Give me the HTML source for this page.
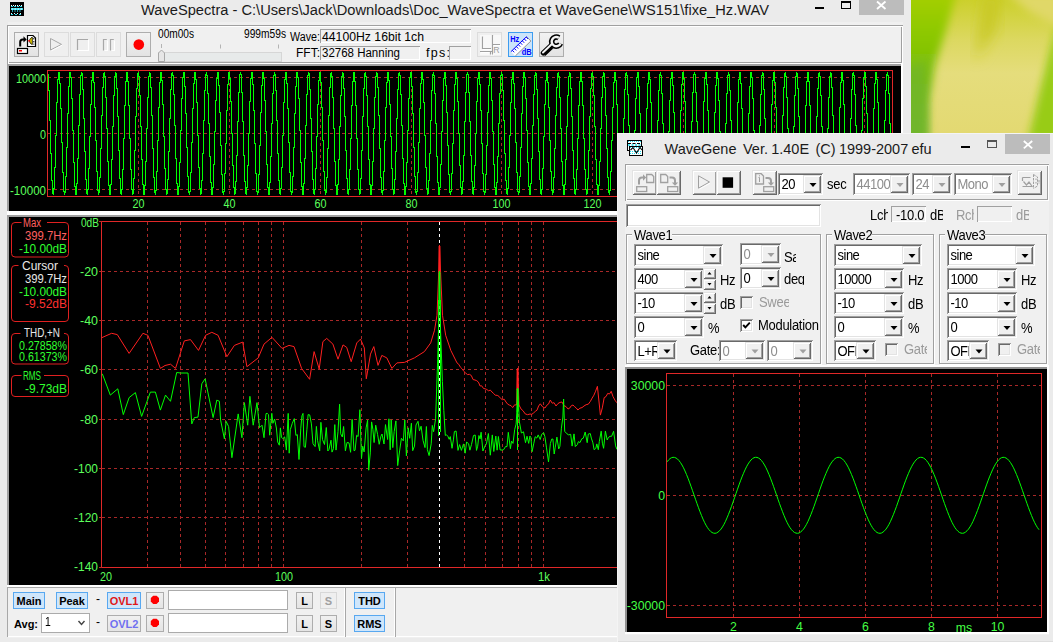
<!DOCTYPE html>
<html><head><meta charset="utf-8"><title>WaveSpectra</title>
<style>
html,body{margin:0;padding:0}
body{width:1053px;height:642px;overflow:hidden;position:relative;background:#ebebeb;font-family:"Liberation Sans",sans-serif;font-size:13px;color:#000}
div,span{position:absolute;box-sizing:border-box;white-space:pre}
svg{position:absolute;left:0;top:0;overflow:visible}
.gd{stroke:#a82828;stroke-width:1;stroke-dasharray:3 3;fill:none;shape-rendering:crispEdges}
.fr{stroke:#e02828;stroke-width:1;fill:none;shape-rendering:crispEdges}
.mono{font-family:"Liberation Mono",monospace;font-size:10px;line-height:12px;transform:scaleY(1.3);transform-origin:0 0;letter-spacing:0}
.lab{font-family:"Liberation Sans",sans-serif;font-size:12.300px;fill:#44ff44}
.mlab{font-family:"Liberation Sans",sans-serif;font-size:12.5px;fill:#5cff5c}
.mt{font-family:"Liberation Sans",sans-serif;font-size:12.5px}
.sunk1{box-shadow:inset 1px 1px 0 #a0a0a0,inset -1px -1px 0 #fff}
.sunk{background:#fff;box-shadow:inset 1px 1px 0 #a0a0a0,inset -1px -1px 0 #fff,inset 2px 2px 0 #696969,inset -2px -2px 0 #e3e3e3}
.raised{background:#f0f0f0;box-shadow:inset 1px 1px 0 #e3e3e3,inset -1px -1px 0 #696969,inset 2px 2px 0 #fff,inset -2px -2px 0 #a0a0a0}
.tb{border:1px solid #adadad;background:linear-gradient(#f2f2f2,#e3e3e3)}
.tbd{border:1px solid #dcdcdc;background:#efefef}
.tba{border:1px solid #3c9cf0;background:#cce4fa}
.t{font-size:13px;line-height:15px;letter-spacing:-0.3px;transform:scaleY(1.06);transform-origin:0 0}
.g{color:#9a9a9a}
.grp{border:1px solid #a0a0a0;box-shadow:1px 1px 0 #fff,inset 1px 1px 0 #fff}
.bb{border:1px solid #adadad;background:linear-gradient(#f0f0f0,#e4e4e4);font-weight:bold;font-size:11px;line-height:17px;text-align:center}
.ba{border:1px solid #58a8f0;background:#cfe6fb}
</style></head>
<body>
<!-- wallpaper -->
<svg width="1053" height="140" style="left:0;top:0">
<defs>
<filter id="bl" x="-20%" y="-20%" width="140%" height="140%"><feGaussianBlur stdDeviation="4"/></filter>
<filter id="bl2" x="-20%" y="-20%" width="140%" height="140%"><feGaussianBlur stdDeviation="7"/></filter>
<linearGradient id="wg1" x1="0" y1="0" x2="0" y2="1"><stop offset="0" stop-color="#ccd02c"/><stop offset="0.3" stop-color="#dcd860"/><stop offset="0.55" stop-color="#e5dd7c"/><stop offset="1" stop-color="#e3d972"/></linearGradient>
<linearGradient id="wg2" x1="0" y1="0" x2="0" y2="1"><stop offset="0" stop-color="#a8d000"/><stop offset="0.3" stop-color="#8cc800"/><stop offset="0.6" stop-color="#78bc10"/><stop offset="1" stop-color="#70b828"/></linearGradient>
<clipPath id="wc"><rect x="911" y="0" width="142" height="133"/></clipPath>
</defs>
<g clip-path="url(#wc)">
<rect x="911" y="0" width="142" height="133" fill="url(#wg1)"/>
<path d="M985 -5L1000 -5 995 30 975 60z" fill="#c8c820" filter="url(#bl2)"/>
<path d="M900 -10H957L946 30 935 65 929 100 928 140H900z" fill="url(#wg2)" filter="url(#bl)"/>
<path d="M905 70L925 60 928 140H905z" fill="#70b430" opacity=".6" filter="url(#bl)"/>
<path d="M1060 15L1050 50 1040 90 1028 140H1060z" fill="#98cc18" filter="url(#bl)"/>
<path d="M1060 -8H1005L1030 12 1060 28z" fill="#e0d868" filter="url(#bl)"/>
</g>
</svg>
<!-- ================= WaveSpectra window ================= -->
<div id="ws" style="left:0;top:0;width:911px;height:642px;background:#ebebeb">
  <div style="left:8px;top:22px;width:895px;height:616px;background:#f0f0f0"></div>
  <!-- title bar -->
  <svg width="30" height="20" viewBox="0 0 30 20"><rect x="10" y="2" width="14" height="14" fill="#000"/><path d="M11 5.500h12" stroke="#fff" stroke-width="1" stroke-dasharray="1 1"/><path d="M11 6.500h12" stroke="#30d8e8" stroke-width="1" stroke-dasharray="2 1"/><rect x="11" y="8" width="12" height="2" fill="#30e0f0"/><path d="M11.500 9h11" stroke="#fff" stroke-width="1" stroke-dasharray="1.500 1.500"/><path d="M12 11h10" stroke="#30d8e8" stroke-width="1.500" stroke-dasharray="1 1.500"/><path d="M11 13.500h12" stroke="#e0ffff" stroke-width="1" stroke-dasharray="1 2"/><path d="M11 14.500h12" stroke="#30d8e8" stroke-width="1" stroke-dasharray="2 2"/></svg>
  <span id="wstitle" style="left:141px;top:1px;font-size:14.66px;line-height:18px;color:#1a1a1a">WaveSpectra - C:\Users\Jack\Downloads\Doc_WaveSpectra et WaveGene\WS151\fixe_Hz.WAV</span>
  <div style="left:815px;top:7px;width:9px;height:2px;background:#000"></div>
  <div style="left:841px;top:1px;width:10px;height:8px;border:1px solid #000;border-top-width:2px"></div>
  <div style="left:859px;top:0;width:45px;height:15px;background:#bcbcbc"></div>
  <svg width="911" height="20"><path d="M877 1.5l8.5 7.5M885.5 1.5l-8.5 7.5" stroke="#fff" stroke-width="1.8" fill="none"/></svg>

  <!-- toolbar panel -->
  <div style="left:7px;top:25px;width:896px;height:39px;background:#f0f0f0;box-shadow:inset 1px 1px 0 #a0a0a0,inset -1px -1px 0 #fff,inset 2px 2px 0 #fff,inset -2px -2px 0 #a0a0a0"></div>
  <div class="tb" style="left:14px;top:32px;width:25px;height:25px"></div>
  <div class="tbd" style="left:44px;top:32px;width:25px;height:25px"></div>
  <div class="tbd" style="left:70px;top:32px;width:25px;height:25px"></div>
  <div class="tbd" style="left:96px;top:32px;width:25px;height:25px"></div>
  <div class="tb" style="left:126px;top:32px;width:25px;height:25px"></div>
  <div class="tbd" style="left:477px;top:32px;width:25px;height:25px"></div>
  <div class="tba" style="left:508px;top:32px;width:25px;height:25px"></div>
  <div class="tb" style="left:539px;top:32px;width:25px;height:25px"></div>
  <svg id="wsicons" width="911" height="70">
    <!-- open icon -->
    <rect x="17.5" y="48.5" width="10" height="5" fill="#fff" stroke="#000" stroke-width="1.2"/><rect x="19" y="50" width="3" height="1.5" fill="#f00"/>
    <path d="M20.2 46.5v-4.5q0-2.6 2.6-2.6h1.2" stroke="#000" stroke-width="2" fill="none"/><path d="M23.5 36.3l3.2 3.1-3.2 3.1z" fill="#000"/>
    <path d="M27.5 35.5h5.5l2.5 2.5v8.5h-8z" fill="#fff" stroke="#000" stroke-width="1.2"/><path d="M32.3 37.2c-3.6 1.2-3.6 6.2 0 7.4z" fill="#e8d000" stroke="#000" stroke-width=".8"/><path d="M33.8 38v1.4M33.8 41v1.4M33.8 43.6v1" stroke="#000" stroke-width="1"/><rect x="28.3" y="40" width="1.5" height="1.6" fill="#f00"/>
    <!-- play disabled -->
    <path d="M50.5 38.5v11.5l11-5.6z" fill="none" stroke="#a8a8a8" stroke-width="1"/><path d="M51.5 50.8l10.6-5.6" stroke="#fff" stroke-width="1"/>
    <!-- stop disabled -->
    <path d="M77.5 50v-10.5h10.5" fill="none" stroke="#a8a8a8" stroke-width="1.2"/><path d="M78 50.5h10.5v-10.5" fill="none" stroke="#fff" stroke-width="1.2"/>
    <!-- pause disabled -->
    <path d="M103.5 50.5v-11h3.3M110.5 50.5v-11h3.3" fill="none" stroke="#a8a8a8" stroke-width="1.2"/><path d="M104.5 50.5h3v-10M111.5 50.5h3v-10" fill="none" stroke="#fff" stroke-width="1.1"/>
    <!-- record -->
    <circle cx="138.8" cy="44.6" r="5.3" fill="#f00"/>
    <!-- slider -->
    <rect x="158.5" y="52.5" width="123" height="9" fill="#e7eaea" stroke="#d6d6d6" stroke-width="1"/>
    <path d="M158.5 61.500v-8.500l3-3 3 3v8.500z" fill="#e6e6e6" stroke="#a8a8a8" stroke-width="1"/>
    <path d="M161.500 44v4M220.500 44.500v4M278.500 44.500v4" stroke="#b4b4b4" stroke-width="1"/>
    <!-- LR disabled -->
    <rect x="480" y="35" width="21" height="20" fill="#f8f8f8"/>
    <path d="M483.500 37.500v12h8.500M493.500 36v19.500M481 52.500h12M494 45.500h7M491.500 53v2.500" fill="none" stroke="#fff" stroke-width="1.200"/>
    <path d="M482.500 36.500v12h8.500M492.500 35v19.500M480 51.500h12M493 44.500h7M490.500 52v2.500" fill="none" stroke="#a0a0a0" stroke-width="1.200"/>
    <text x="493.300" y="52.800" font-family="Liberation Sans,sans-serif" font-size="8.800" fill="#a0a0a0">R</text>
    <!-- Hz dB -->
    <path d="M510.900 51.700l15.600-15 4.400 4.300-15.600 15z" fill="#fff"/>
    <path d="M526.500 36.700l4.400 4.300-15.600 15" fill="none" stroke="#909090" stroke-width="1"/>
    <path d="M510.900 51.700l15.600-15" stroke="#0000ff" stroke-width="1" fill="none"/>
    <path d="M512.300 50.300l1.900 2M514.300 48.400l1.900 2M516.300 46.500l1.900 2M518.300 44.600l1.900 2M520.300 42.700l1.900 2M522.300 40.800l1.900 2M524.300 38.900l1.900 2M526.200 37l1.900 2" stroke="#0000ff" stroke-width="1"/>
    <text x="510.300" y="42" font-family="Liberation Sans,sans-serif" font-size="9.300" font-weight="bold" fill="#0000ff" textLength="9" lengthAdjust="spacingAndGlyphs">Hz</text>
    <text x="521.800" y="55.200" font-family="Liberation Sans,sans-serif" font-size="9.300" font-weight="bold" fill="#0000ff" textLength="10" lengthAdjust="spacingAndGlyphs">dB</text>
    <!-- wrench -->
    <g transform="translate(-0.8,0.9)">
    <path d="M545 54l8.500-8" stroke="#808080" stroke-width="3" stroke-linecap="square"/>
    <path d="M543.800 52l8.700-8.200" stroke="#000" stroke-width="4.800" stroke-linecap="round"/>
    <path d="M559.600 36.900a4.600 4.600 0 1 0 1.700 5.700" fill="none" stroke="#000" stroke-width="5.600" stroke-linejoin="bevel"/>
    <path d="M559.600 36.900a4.600 4.600 0 1 0 1.700 5.700" fill="none" stroke="#f4f4f4" stroke-width="2.400"/>
    <path d="M543.800 51.600l8.900-8.400" stroke="#f4f4f4" stroke-width="2" stroke-linecap="round"/>
    <path d="M545.600 54.200l7.600-7.200" stroke="#000" stroke-width="1.800"/>
    </g>
  </svg>
  <svg width="198" height="42"><text x="158" y="37.5" textLength="36" lengthAdjust="spacingAndGlyphs" class="mt" fill="#000">00m00s</text></svg>
  <svg width="290" height="42"><text x="244" y="37.5" textLength="42" lengthAdjust="spacingAndGlyphs" class="mt" fill="#000">999m59s</text></svg>
  <svg width="324" height="45"><text x="290" y="40.5" textLength="30" lengthAdjust="spacingAndGlyphs" class="mt" fill="#000">Wave:</text></svg>
  <svg width="324" height="61"><text x="296" y="56.5" textLength="24" lengthAdjust="spacingAndGlyphs" class="mt" fill="#000">FFT:</text></svg>
  <svg width="454" height="61"><text x="426" y="56.5" textLength="24" lengthAdjust="spacing" class="mt" fill="#000">fps:</text></svg>
  <div class="sunk1" style="left:320px;top:29px;width:151px;height:14px"></div>
  <div class="sunk1" style="left:320px;top:46px;width:100px;height:14px"></div>
  <div class="sunk1" style="left:449px;top:46px;width:22px;height:14px"></div>
  <svg width="428" height="45"><text x="322" y="40.5" textLength="102" lengthAdjust="spacingAndGlyphs" class="mt" fill="#000">44100Hz 16bit 1ch</text></svg>
  <svg width="404" height="61"><text x="322" y="56.5" textLength="78" lengthAdjust="spacingAndGlyphs" class="mt" fill="#000">32768 Hanning</text></svg>

  <!-- waveform display -->
  <div style="left:7px;top:64px;width:896px;height:151px;background:#fff"></div>
  <div style="left:7px;top:64px;width:894px;height:147px;background:#a0a0a0"></div>
  <div style="left:9px;top:66px;width:892px;height:145px;background:#000"></div>
  <svg width="911" height="215">
    <path d="M48 77.5H892" class="gd"/>
<path d="M48 133.5H892" class="gd"/>
<path d="M48 189.5H892" class="gd"/>
<path d="M138.5 71V196" class="gd"/>
<path d="M229.5 71V196" class="gd"/>
<path d="M320.5 71V196" class="gd"/>
<path d="M411.5 71V196" class="gd"/>
<path d="M501.5 71V196" class="gd"/>
<path d="M592.5 71V196" class="gd"/>
<path d="M683.5 71V196" class="gd"/>
<path d="M774.5 71V196" class="gd"/>
<path d="M864.5 71V196" class="gd"/>
    <path d="M48.5 74V91M49.5 90V121M50.5 120V154M51.5 153V181M52.5 180V194M53.5 188V195M54.5 167V189M55.5 135V168M56.5 102V136M57.5 79V103M58.5 72V80M59.5 72V84M60.5 83V109M61.5 108V143M62.5 142V173M63.5 172V192M64.5 191V195M65.5 176V193M66.5 147V177M67.5 113V148M68.5 86V114M69.5 72V87M70.5 72V78M71.5 77V99M72.5 98V131M73.5 130V163M74.5 162V187M75.5 186V195M76.5 183V195M77.5 158V184M78.5 125V159M79.5 94V126M80.5 75V95M81.5 72V76M82.5 73V90M83.5 89V119M84.5 118V152M85.5 151V180M86.5 179V194M87.5 189V195M88.5 168V190M89.5 136V169M90.5 104V137M91.5 80V105M92.5 72V81M93.5 72V83M94.5 82V108M95.5 107V141M96.5 140V172M97.5 171V191M98.5 190V195M99.5 177V193M100.5 148V178M101.5 115V149M102.5 87V116M103.5 73V88M104.5 72V77M105.5 76V98M106.5 97V129M107.5 128V162M108.5 161V186M109.5 185V195M110.5 184V195M111.5 159V185M112.5 126V160M113.5 95V127M114.5 76V96M115.5 72V77M116.5 73V89M117.5 88V117M118.5 116V151M119.5 150V179M120.5 178V194M121.5 189V195M122.5 169V190M123.5 138V170M124.5 105V139M125.5 81V106M126.5 72V82M127.5 72V82M128.5 81V106M129.5 105V139M130.5 138V170M131.5 169V190M132.5 189V195M133.5 178V194M134.5 150V179M135.5 116V151M136.5 88V117M137.5 73V89M138.5 72V77M139.5 76V96M140.5 95V127M141.5 126V160M142.5 159V185M143.5 184V195M144.5 185V195M145.5 161V186M146.5 128V162M147.5 97V129M148.5 76V98M149.5 72V77M150.5 73V88M151.5 87V116M152.5 115V149M153.5 148V178M154.5 177V193M155.5 190V195M156.5 171V191M157.5 140V172M158.5 107V141M159.5 82V108M160.5 72V83M161.5 72V81M162.5 80V105M163.5 104V137M164.5 136V169M165.5 168V190M166.5 189V195M167.5 179V194M168.5 151V180M169.5 118V152M170.5 89V119M171.5 73V90M172.5 72V76M173.5 75V95M174.5 94V126M175.5 125V159M176.5 158V184M177.5 183V195M178.5 186V195M179.5 162V187M180.5 130V163M181.5 98V131M182.5 77V99M183.5 72V78M184.5 72V87M185.5 86V114M186.5 113V148M187.5 147V177M188.5 176V193M189.5 191V195M190.5 172V192M191.5 142V173M192.5 108V143M193.5 83V109M194.5 72V84M195.5 72V80M196.5 79V103M197.5 102V136M198.5 135V168M199.5 167V189M200.5 188V195M201.5 180V194M202.5 153V181M203.5 120V154M204.5 90V121M205.5 74V91M206.5 72V76M207.5 75V94M208.5 93V124M209.5 123V157M210.5 156V183M211.5 182V195M212.5 187V195M213.5 164V188M214.5 131V165M215.5 100V132M216.5 78V101M217.5 72V79M218.5 72V86M219.5 85V113M220.5 112V146M221.5 145V175M222.5 174V193M223.5 191V195M224.5 173V192M225.5 143V174M226.5 110V144M227.5 84V111M228.5 72V85M229.5 72V79M230.5 78V102M231.5 101V134M232.5 133V166M233.5 165V188M234.5 187V195M235.5 181V194M236.5 155V182M237.5 121V156M238.5 92V122M239.5 74V93M240.5 72V75M241.5 74V93M242.5 92V122M243.5 121V156M244.5 155V182M245.5 181V194M246.5 187V195M247.5 165V188M248.5 133V166M249.5 101V134M250.5 78V102M251.5 72V79M252.5 72V85M253.5 84V111M254.5 110V144M255.5 143V174M256.5 173V192M257.5 191V195M258.5 174V193M259.5 145V175M260.5 112V146M261.5 85V113M262.5 72V86M263.5 72V79M264.5 78V101M265.5 100V132M266.5 131V165M267.5 164V188M268.5 187V195M269.5 182V195M270.5 156V183M271.5 123V157M272.5 93V124M273.5 75V94M274.5 72V76M275.5 74V91M276.5 90V121M277.5 120V154M278.5 153V181M279.5 180V194M280.5 188V195M281.5 167V189M282.5 135V168M283.5 102V136M284.5 79V103M285.5 72V80M286.5 72V84M287.5 83V109M288.5 108V143M289.5 142V173M290.5 172V192M291.5 191V195M292.5 176V193M293.5 147V177M294.5 113V148M295.5 86V114M296.5 72V87M297.5 72V78M298.5 77V99M299.5 98V131M300.5 130V163M301.5 162V187M302.5 186V195M303.5 183V195M304.5 158V184M305.5 125V159M306.5 94V126M307.5 75V95M308.5 72V76M309.5 73V90M310.5 89V119M311.5 118V152M312.5 151V180M313.5 179V194M314.5 189V195M315.5 168V190M316.5 136V169M317.5 104V137M318.5 80V105M319.5 72V81M320.5 72V83M321.5 82V108M322.5 107V141M323.5 140V172M324.5 171V191M325.5 190V195M326.5 177V193M327.5 148V178M328.5 115V149M329.5 87V116M330.5 73V88M331.5 72V77M332.5 76V98M333.5 97V129M334.5 128V162M335.5 161V186M336.5 185V195M337.5 184V195M338.5 159V185M339.5 126V160M340.5 95V127M341.5 76V96M342.5 72V77M343.5 73V89M344.5 88V117M345.5 116V151M346.5 150V179M347.5 178V194M348.5 189V195M349.5 169V190M350.5 138V170M351.5 105V139M352.5 81V106M353.5 72V82M354.5 72V82M355.5 81V106M356.5 105V139M357.5 138V170M358.5 169V190M359.5 189V195M360.5 178V194M361.5 150V179M362.5 116V151M363.5 88V117M364.5 73V89M365.5 72V77M366.5 76V96M367.5 95V127M368.5 126V160M369.5 159V185M370.5 184V195M371.5 185V195M372.5 161V186M373.5 128V162M374.5 97V129M375.5 76V98M376.5 72V77M377.5 73V88M378.5 87V116M379.5 115V149M380.5 148V178M381.5 177V193M382.5 190V195M383.5 171V191M384.5 140V172M385.5 107V141M386.5 82V108M387.5 72V83M388.5 72V81M389.5 80V105M390.5 104V137M391.5 136V169M392.5 168V190M393.5 189V195M394.5 179V194M395.5 151V180M396.5 118V152M397.5 89V119M398.5 73V90M399.5 72V76M400.5 75V95M401.5 94V126M402.5 125V159M403.5 158V184M404.5 183V195M405.5 186V195M406.5 162V187M407.5 130V163M408.5 98V131M409.5 77V99M410.5 72V78M411.5 72V87M412.5 86V114M413.5 113V148M414.5 147V177M415.5 176V193M416.5 191V195M417.5 172V192M418.5 142V173M419.5 108V143M420.5 83V109M421.5 72V84M422.5 72V80M423.5 79V103M424.5 102V136M425.5 135V168M426.5 167V189M427.5 188V195M428.5 180V194M429.5 153V181M430.5 120V154M431.5 90V121M432.5 74V91M433.5 72V76M434.5 75V94M435.5 93V124M436.5 123V157M437.5 156V183M438.5 182V195M439.5 187V195M440.5 164V188M441.5 131V165M442.5 100V132M443.5 78V101M444.5 72V79M445.5 72V86M446.5 85V113M447.5 112V146M448.5 145V175M449.5 174V193M450.5 191V195M451.5 173V192M452.5 143V174M453.5 110V144M454.5 84V111M455.5 72V85M456.5 72V79M457.5 78V102M458.5 101V134M459.5 133V166M460.5 165V188M461.5 187V195M462.5 181V194M463.5 155V182M464.5 121V156M465.5 92V122M466.5 74V93M467.5 72V75M468.5 74V93M469.5 92V122M470.5 121V156M471.5 155V182M472.5 181V194M473.5 187V195M474.5 165V188M475.5 133V166M476.5 101V134M477.5 78V102M478.5 72V79M479.5 72V85M480.5 84V111M481.5 110V144M482.5 143V174M483.5 173V192M484.5 191V195M485.5 174V193M486.5 145V175M487.5 112V146M488.5 85V113M489.5 72V86M490.5 72V79M491.5 78V101M492.5 100V132M493.5 131V165M494.5 164V188M495.5 187V195M496.5 182V195M497.5 156V183M498.5 123V157M499.5 93V124M500.5 75V94M501.5 72V76M502.5 74V91M503.5 90V121M504.5 120V154M505.5 153V181M506.5 180V194M507.5 188V195M508.5 167V189M509.5 135V168M510.5 102V136M511.5 79V103M512.5 72V80M513.5 72V84M514.5 83V109M515.5 108V143M516.5 142V173M517.5 172V192M518.5 191V195M519.5 176V193M520.5 147V177M521.5 113V148M522.5 86V114M523.5 72V87M524.5 72V78M525.5 77V99M526.5 98V131M527.5 130V163M528.5 162V187M529.5 186V195M530.5 183V195M531.5 158V184M532.5 125V159M533.5 94V126M534.5 75V95M535.5 72V76M536.5 73V90M537.5 89V119M538.5 118V152M539.5 151V180M540.5 179V194M541.5 189V195M542.5 168V190M543.5 136V169M544.5 104V137M545.5 80V105M546.5 72V81M547.5 72V83M548.5 82V108M549.5 107V141M550.5 140V172M551.5 171V191M552.5 190V195M553.5 177V193M554.5 148V178M555.5 115V149M556.5 87V116M557.5 73V88M558.5 72V77M559.5 76V98M560.5 97V129M561.5 128V162M562.5 161V186M563.5 185V195M564.5 184V195M565.5 159V185M566.5 126V160M567.5 95V127M568.5 76V96M569.5 72V77M570.5 73V89M571.5 88V117M572.5 116V151M573.5 150V179M574.5 178V194M575.5 189V195M576.5 169V190M577.5 138V170M578.5 105V139M579.5 81V106M580.5 72V82M581.5 72V82M582.5 81V106M583.5 105V139M584.5 138V170M585.5 169V190M586.5 189V195M587.5 178V194M588.5 150V179M589.5 116V151M590.5 88V117M591.5 73V89M592.5 72V77M593.5 76V96M594.5 95V127M595.5 126V160M596.5 159V185M597.5 184V195M598.5 185V195M599.5 161V186M600.5 128V162M601.5 97V129M602.5 76V98M603.5 72V77M604.5 73V88M605.5 87V116M606.5 115V149M607.5 148V178M608.5 177V193M609.5 190V195M610.5 171V191M611.5 140V172M612.5 107V141M613.5 82V108M614.5 72V83M615.5 72V81M616.5 80V105M617.5 104V137M618.5 136V169M619.5 168V190M620.5 189V195M621.5 179V194M622.5 151V180M623.5 118V152M624.5 89V119M625.5 73V90M626.5 72V76M627.5 75V95M628.5 94V126M629.5 125V159M630.5 158V184M631.5 183V195M632.5 186V195M633.5 162V187M634.5 130V163M635.5 98V131M636.5 77V99M637.5 72V78M638.5 72V87M639.5 86V114M640.5 113V148M641.5 147V177M642.5 176V193M643.5 191V195M644.5 172V192M645.5 142V173M646.5 108V143M647.5 83V109M648.5 72V84M649.5 72V80M650.5 79V103M651.5 102V136M652.5 135V168M653.5 167V189M654.5 188V195M655.5 180V194M656.5 153V181M657.5 120V154M658.5 90V121M659.5 74V91M660.5 72V76M661.5 75V94M662.5 93V124M663.5 123V157M664.5 156V183M665.5 182V195M666.5 187V195M667.5 164V188M668.5 131V165M669.5 100V132M670.5 78V101M671.5 72V79M672.5 72V86M673.5 85V113M674.5 112V146M675.5 145V175M676.5 174V193M677.5 191V195M678.5 173V192M679.5 143V174M680.5 110V144M681.5 84V111M682.5 72V85M683.5 72V79M684.5 78V102M685.5 101V134M686.5 133V166M687.5 165V188M688.5 187V195M689.5 181V194M690.5 155V182M691.5 121V156M692.5 92V122M693.5 74V93M694.5 72V75M695.5 74V93M696.5 92V122M697.5 121V156M698.5 155V182M699.5 181V194M700.5 187V195M701.5 165V188M702.5 133V166M703.5 101V134M704.5 78V102M705.5 72V79M706.5 72V85M707.5 84V111M708.5 110V144M709.5 143V174M710.5 173V192M711.5 191V195M712.5 174V193M713.5 145V175M714.5 112V146M715.5 85V113M716.5 72V86M717.5 72V79M718.5 78V101M719.5 100V132M720.5 131V165M721.5 164V188M722.5 187V195M723.5 182V195M724.5 156V183M725.5 123V157M726.5 93V124M727.5 75V94M728.5 72V76M729.5 74V91M730.5 90V121M731.5 120V154M732.5 153V181M733.5 180V194M734.5 188V195M735.5 167V189M736.5 135V168M737.5 102V136M738.5 79V103M739.5 72V80M740.5 72V84M741.5 83V109M742.5 108V143M743.5 142V173M744.5 172V192M745.5 191V195M746.5 176V193M747.5 147V177M748.5 113V148M749.5 86V114M750.5 72V87M751.5 72V78M752.5 77V99M753.5 98V131M754.5 130V163M755.5 162V187M756.5 186V195M757.5 183V195M758.5 158V184M759.5 125V159M760.5 94V126M761.5 75V95M762.5 72V76M763.5 73V90M764.5 89V119M765.5 118V152M766.5 151V180M767.5 179V194M768.5 189V195M769.5 168V190M770.5 136V169M771.5 104V137M772.5 80V105M773.5 72V81M774.5 72V83M775.5 82V108M776.5 107V141M777.5 140V172M778.5 171V191M779.5 190V195M780.5 177V193M781.5 148V178M782.5 115V149M783.5 87V116M784.5 73V88M785.5 72V77M786.5 76V98M787.5 97V129M788.5 128V162M789.5 161V186M790.5 185V195M791.5 184V195M792.5 159V185M793.5 126V160M794.5 95V127M795.5 76V96M796.5 72V77M797.5 73V89M798.5 88V117M799.5 116V151M800.5 150V179M801.5 178V194M802.5 189V195M803.5 169V190M804.5 138V170M805.5 105V139M806.5 81V106M807.5 72V82M808.5 72V82M809.5 81V106M810.5 105V139M811.5 138V170M812.5 169V190M813.5 189V195M814.5 178V194M815.5 150V179M816.5 116V151M817.5 88V117M818.5 73V89M819.5 72V77M820.5 76V96M821.5 95V127M822.5 126V160M823.5 159V185M824.5 184V195M825.5 185V195M826.5 161V186M827.5 128V162M828.5 97V129M829.5 76V98M830.5 72V77M831.5 73V88M832.5 87V116M833.5 115V149M834.5 148V178M835.5 177V193M836.5 190V195M837.5 171V191M838.5 140V172M839.5 107V141M840.5 82V108M841.5 72V83M842.5 72V81M843.5 80V105M844.5 104V137M845.5 136V169M846.5 168V190M847.5 189V195M848.5 179V194M849.5 151V180M850.5 118V152M851.5 89V119M852.5 73V90M853.5 72V76M854.5 75V95M855.5 94V126M856.5 125V159M857.5 158V184M858.5 183V195M859.5 186V195M860.5 162V187M861.5 130V163M862.5 98V131M863.5 77V99M864.5 72V78M865.5 72V87M866.5 86V114M867.5 113V148M868.5 147V177M869.5 176V193M870.5 191V195M871.5 172V192M872.5 142V173M873.5 108V143M874.5 83V109M875.5 72V84M876.5 72V80M877.5 79V103M878.5 102V136M879.5 135V168M880.5 167V189M881.5 188V195M882.5 180V194M883.5 153V181M884.5 120V154M885.5 90V121M886.5 74V91M887.5 72V76M888.5 75V94M889.5 93V124M890.5 123V157M891.5 156V183" stroke="#00ff00" stroke-width="1" fill="none" shape-rendering="crispEdges"/>
    <rect x="47.500" y="70.500" width="845" height="126" class="fr"/>
    <g class="mlab">
      <text x="16" y="82.5" textLength="30" lengthAdjust="spacingAndGlyphs">10000</text><text x="40" y="138.5" textLength="6" lengthAdjust="spacingAndGlyphs">0</text><text x="10" y="194.5" textLength="36" lengthAdjust="spacingAndGlyphs">-10000</text>
      <text x="132.5" y="208" textLength="12" lengthAdjust="spacingAndGlyphs">20</text><text x="223.5" y="208" textLength="12" lengthAdjust="spacingAndGlyphs">40</text><text x="314.5" y="208" textLength="12" lengthAdjust="spacingAndGlyphs">60</text><text x="405.5" y="208" textLength="12" lengthAdjust="spacingAndGlyphs">80</text><text x="492.5" y="208" textLength="18" lengthAdjust="spacingAndGlyphs">100</text><text x="583.5" y="208" textLength="18" lengthAdjust="spacingAndGlyphs">120</text>
    </g>
  </svg>

  <!-- spectrum display -->
  <div style="left:7px;top:215px;width:896px;height:372px;background:#fff"></div>
  <div style="left:7px;top:215px;width:894px;height:370px;background:#a0a0a0"></div>
  <div style="left:9px;top:217px;width:892px;height:368px;background:#000"></div>
  <svg width="911" height="590">
    <path d="M102 271.5H617" class="gd"/>
<path d="M102 320.5H617" class="gd"/>
<path d="M102 369.5H617" class="gd"/>
<path d="M102 419.5H617" class="gd"/>
<path d="M102 468.5H617" class="gd"/>
<path d="M102 517.5H617" class="gd"/>
<path d="M147.5 222V569" class="gd"/>
<path d="M180.5 222V569" class="gd"/>
<path d="M205.5 222V569" class="gd"/>
<path d="M225.5 222V569" class="gd"/>
<path d="M243.5 222V569" class="gd"/>
<path d="M258.5 222V569" class="gd"/>
<path d="M271.5 222V569" class="gd"/>
<path d="M283.5 222V569" class="gd"/>
<path d="M361.5 222V569" class="gd"/>
<path d="M407.5 222V569" class="gd"/>
<path d="M464.5 222V569" class="gd"/>
<path d="M485.5 222V569" class="gd"/>
<path d="M502.5 222V569" class="gd"/>
<path d="M518.5 222V569" class="gd"/>
<path d="M531.5 222V569" class="gd"/>
<path d="M543.5 222V569" class="gd"/>
    <path d="M439.500 222V567" stroke="#fff" stroke-width="1" stroke-dasharray="3 3" fill="none" shape-rendering="crispEdges"/>
    <polyline points="101.3,337.9 111.6,333.3 117.3,334.6 129.1,353.4 142.9,333.3 147.9,335.3 160.4,368.4 165.0,365.5 170.5,364.2 175.5,368.4 184.3,340.9 190.5,339.6 198.5,350.4 205.6,335.3 211.8,332.3 218.1,335.3 226.9,356.7 234.4,345.4 242.7,342.1 246.9,366.7 258.2,357.9 264.0,344.1 272.0,337.3 282.0,348.4 289.0,345.4 294.0,346.6 301.6,368.4 309.6,379.3 314.1,351.6 319.2,369.0 322.9,341.6 326.7,338.4 332.9,344.1 338.0,359.2 343.0,344.9 346.7,347.4 351.2,361.7 356.8,342.9 360.5,339.1 364.3,347.9 366.3,378.8 370.5,354.1 373.8,346.6 378.0,365.4 381.8,355.4 386.8,357.9 391.9,368.4 396.9,362.9 404.4,362.4 414.4,357.9 424.4,351.6 430.7,342.9 434.5,330.3 437.0,315.3 438.7,272.7 439.5,245.1 440.6,272.7 442.5,315.3 445.7,335.3 450.8,350.4 457.0,362.9 458.7,364.2 460.4,367.2 462.1,368.8 463.8,371.3 465.7,373.1 467.5,374.6 469.4,374.3 471.3,375.5 473.1,379.6 475.0,380.0 476.7,380.7 478.4,382.1 480.1,386.0 481.7,385.8 483.4,388.4 485.1,388.8 486.8,389.5 488.6,390.8 490.3,390.1 492.0,392.0 493.7,393.5 495.4,395.3 497.2,395.3 498.9,396.3 500.7,398.5 502.4,399.7 504.2,399.2 506.0,402.0 507.7,404.2 509.4,405.1 511.0,405.6 512.7,407.6 514.6,404.8 516.5,405.0 517.7,368.0 519.0,405.0 521.1,409.1 523.1,410.8 525.2,413.9 527.6,414.7 530.0,414.0 531.8,414.3 533.5,413.0 535.3,411.4 537.0,410.2 538.6,406.0 540.3,403.8 542.6,406.9 545.0,408.0 546.8,405.2 548.5,404.1 550.3,400.0 552.2,403.2 554.1,402.7 556.0,406.0 558.0,403.5 560.0,402.4 562.0,402.0 564.0,405.8 566.0,406.5 568.0,409.0 569.7,408.1 571.3,405.7 573.0,405.0 574.6,406.7 576.3,408.0 577.9,410.0 579.9,408.2 582.0,407.6 584.0,406.0 586.1,404.7 588.3,404.2 590.4,401.3 592.1,398.1 593.9,395.2 595.6,391.2 597.4,386.3 600.4,415.1 602.3,407.9 604.2,397.6 606.0,396.6 607.7,393.4 609.5,394.0 611.2,391.3 613.0,396.6 614.9,400.1 616.7,402.6 618.4,401.5 620.0,400.0" stroke="#ff2020" stroke-width="1" fill="none"/>
    <path d="M439.500 246V274M517.500 369V390" stroke="#ff2020" stroke-width="1.800" fill="none"/>
    <polyline points="102.3,373.8 110.3,395.1 117.8,388.8 123.3,414.6 129.1,397.6 135.4,392.6 141.6,416.4 150.4,392.1 155.4,392.1 160.4,410.1 165.5,395.1 170.5,401.3 176.7,372.5 180.5,373.0 188.0,373.0 191.8,423.9 194.3,417.6 198.0,417.1 201.8,383.8 205.1,378.8 213.1,417.6 216.8,400.1 219.4,401.3 220.6,420.1 224.4,438.9 226.1,421.4 228.6,426.4 231.9,457.7 238.2,413.9 241.9,437.7 244.4,402.6 247.7,425.2 249.9,396.3 253.2,425.2 257.0,402.6 259.5,427.7 262.0,425.2 264.0,437.7 266.0,413.6 267.4,413.4 268.5,414.7 269.7,435.2 271.8,413.3 272.9,423.3 274.6,419.0 276.4,428.0 277.7,442.0 279.3,445.2 280.4,427.9 281.5,437.5 282.8,438.6 284.7,436.9 286.4,450.1 288.2,413.4 289.2,453.2 290.3,429.7 292.3,423.3 294.3,418.6 295.9,435.4 297.3,434.6 299.0,459.5 300.8,428.2 301.9,415.9 303.0,413.4 304.0,446.7 305.4,447.3 306.9,429.7 308.1,414.6 309.7,414.9 311.4,423.9 313.0,443.7 315.1,446.6 316.4,426.4 317.6,440.7 319.7,450.8 320.9,422.3 322.5,439.5 324.5,444.5 326.3,427.5 327.8,451.0 329.0,449.4 331.0,440.2 332.0,452.1 333.5,448.5 334.8,424.6 336.0,450.1 338.0,431.6 339.6,404.2 340.7,433.8 342.3,437.0 343.6,426.5 345.4,450.8 347.0,442.5 349.0,442.9 350.6,452.3 352.1,419.3 354.0,450.7 355.1,450.2 356.6,435.3 358.1,436.5 359.9,409.7 361.5,458.4 362.7,446.2 364.1,451.9 366.1,427.9 367.6,420.2 368.7,470.2 370.3,452.9 371.6,421.9 372.9,429.4 374.1,442.6 375.7,425.2 377.6,434.5 379.2,444.3 380.9,436.3 382.0,434.0 384.0,444.0 385.5,424.6 387.6,439.5 388.9,418.8 390.2,449.8 391.2,419.8 392.8,447.6 394.2,431.5 395.9,420.9 397.7,465.6 399.6,450.9 401.4,438.2 403.3,440.9 404.8,419.9 406.4,455.9 408.2,427.8 409.7,438.3 411.4,423.2 412.7,450.7 414.5,446.1 416.0,425.0 418.0,421.3 419.5,430.9 421.1,426.2 423.0,440.3 425.0,447.6 426.4,426.5 427.4,449.7 429.1,455.6 431.2,443.8 432.3,425.4 433.6,431.7 435.6,418.8 437.7,359.1 439.2,302.3 439.5,271.0 440.3,323.5 442.4,381.6 443.8,410.4 445.3,435.4 446.5,434.8 447.8,436.2 449.2,439.3 450.3,436.6 452.0,448.3 453.4,439.9 454.4,431.6 456.1,431.0 458.0,450.4 459.6,444.6 461.4,450.4 463.5,443.9 465.2,453.2 466.6,441.9 468.6,443.9 469.9,450.2 471.5,444.5 473.5,435.5 475.2,435.0 476.5,450.4 477.7,446.2 478.9,435.5 480.1,438.9 481.1,432.2 482.9,451.0 485.0,445.9 486.4,443.9 488.4,433.5 490.3,455.2 492.3,434.9 493.8,451.5 495.8,436.1 497.1,450.2 498.4,436.5 500.1,449.9 502.2,450.1 503.7,449.6 505.6,446.5 507.0,446.6 508.3,432.3 510.4,448.7 511.5,441.0 513.0,443.4 514.7,429.5 516.1,424.1 517.3,405.3 517.7,388.0 519.4,421.9 521.4,433.0 523.5,431.8 525.5,442.7 527.0,436.2 528.7,443.4 529.9,436.1 530.9,437.5 532.1,451.7 533.7,443.8 535.2,436.7 536.8,438.1 538.2,434.9 540.2,439.5 541.7,434.3 543.7,432.8 544.9,436.7 546.4,447.1 548.5,461.9 550.4,443.4 551.7,439.1 552.9,439.0 554.2,454.0 555.2,447.8 556.9,437.1 558.7,448.9 559.9,446.3 561.4,428.2 562.9,417.0 563.6,399.0 564.7,431.3 566.8,433.7 568.7,434.9 570.7,434.3 572.1,446.1 574.0,433.9 575.3,446.6 577.3,444.6 578.4,441.6 580.0,442.6 581.7,438.9 583.3,438.2 585.2,432.0 587.2,442.7 588.3,434.0 590.3,433.6 591.3,438.1 592.9,442.8 594.1,449.7 595.8,448.4 596.8,443.9 598.3,449.7 599.3,441.6 601.2,431.2 602.4,443.2 603.6,448.3 605.4,431.1 607.2,440.0 608.2,437.7 610.0,436.3 611.6,436.3 613.6,431.3 615.6,445.9 616.9,449.2 618.9,440.4" stroke="#00ff00" stroke-width="1" fill="none"/>
    <path d="M439.500 272V304M517.500 389V412" stroke="#00ff00" stroke-width="1.800" fill="none"/>
    <path d="M438.500 300V436M440.500 300V432M517.500 412V450" stroke="#00ff00" stroke-width="1" fill="none"/>
    <path d="M101.500 221V567.500H620M101.500 221.500H620" class="fr"/>
    <path d="M99 271.500h3M99 320.500h3M99 369.500h3M99 419.500h3M99 468.500h3M99 517.500h3M99 567.500h3M99 221.500h3" stroke="#c02828" stroke-width="1" shape-rendering="crispEdges"/>
    <g class="mlab">
      <text x="81" y="227" textLength="18" lengthAdjust="spacingAndGlyphs">0dB</text><text x="80" y="276" textLength="18" lengthAdjust="spacingAndGlyphs">-20</text><text x="80" y="325" textLength="18" lengthAdjust="spacingAndGlyphs">-40</text><text x="80" y="374" textLength="18" lengthAdjust="spacingAndGlyphs">-60</text><text x="80" y="424" textLength="18" lengthAdjust="spacingAndGlyphs">-80</text><text x="74" y="473" textLength="24" lengthAdjust="spacingAndGlyphs">-100</text><text x="74" y="522" textLength="24" lengthAdjust="spacingAndGlyphs">-120</text><text x="74" y="571" textLength="24" lengthAdjust="spacingAndGlyphs">-140</text>
      <text x="100" y="581" textLength="12" lengthAdjust="spacingAndGlyphs">20</text><text x="275" y="581" textLength="18" lengthAdjust="spacingAndGlyphs">100</text><text x="538" y="581" textLength="12" lengthAdjust="spacingAndGlyphs">1k</text>
    </g>
    <g fill="none" stroke="#e02020" stroke-width="1">
      <path d="M21.500 222.500h-6.500q-3.500 0-3.500 3.500v27.500q0 3.500 3.500 3.500h50q3.500 0 3.500-3.500v-27.500q0-3.500-3.500-3.500h-18"/>
      <path d="M18.500 265.500h-3.500q-3.500 0-3.500 3.500v49q0 3.500 3.500 3.500h50q3.500 0 3.500-3.500v-49q0-3.500-3.500-3.500h-1"/>
      <path d="M20.500 333.500h-5.500q-3.500 0-3.500 3.500v23.500q0 3.500 3.500 3.500h50q3.500 0 3.500-3.500v-23.500q0-3.500-3.500-3.500h-1"/>
      <path d="M21.500 375.500h-6.500q-3.500 0-3.500 3.500v14q0 3.500 3.500 3.500h50q3.500 0 3.500-3.500v-14q0-3.500-3.500-3.500h-21"/>
    </g>
  </svg>
  <svg width="45" height="231"><text x="23" y="226.5" textLength="18" lengthAdjust="spacingAndGlyphs" class="mt" fill="#ff6060">Max</text></svg>
  <svg width="71" height="244"><text x="25" y="239.5" textLength="42" lengthAdjust="spacingAndGlyphs" class="mt" fill="#ff6060">399.7Hz</text></svg>
  <svg width="71" height="257"><text x="19" y="252.5" textLength="48" lengthAdjust="spacingAndGlyphs" class="mt" fill="#30ff30">-10.00dB</text></svg>
  <svg width="62" height="274"><text x="22" y="269.5" textLength="36" lengthAdjust="spacingAndGlyphs" class="mt" fill="#e8e8e8">Cursor</text></svg>
  <svg width="71" height="287"><text x="25" y="282.5" textLength="42" lengthAdjust="spacingAndGlyphs" class="mt" fill="#e8e8e8">399.7Hz</text></svg>
  <svg width="71" height="300"><text x="19" y="295.5" textLength="48" lengthAdjust="spacingAndGlyphs" class="mt" fill="#30ff30">-10.00dB</text></svg>
  <svg width="71" height="312"><text x="25" y="307.5" textLength="42" lengthAdjust="spacingAndGlyphs" class="mt" fill="#ff3030">-9.52dB</text></svg>
  <svg width="64" height="341"><text x="24" y="336.5" textLength="36" lengthAdjust="spacingAndGlyphs" class="mt" fill="#e8e8e8">THD,+N</text></svg>
  <svg width="71" height="354"><text x="19" y="349.5" textLength="48" lengthAdjust="spacingAndGlyphs" class="mt" fill="#30ff30">0.27858%</text></svg>
  <svg width="71" height="365"><text x="19" y="360.5" textLength="48" lengthAdjust="spacingAndGlyphs" class="mt" fill="#30ff30">0.61373%</text></svg>
  <svg width="45" height="384"><text x="23" y="379.5" textLength="18" lengthAdjust="spacingAndGlyphs" class="mt" fill="#30ff30">RMS</text></svg>
  <svg width="71" height="397"><text x="25" y="392.5" textLength="42" lengthAdjust="spacingAndGlyphs" class="mt" fill="#30ff30">-9.73dB</text></svg>

  <!-- bottom bar -->
  <div style="left:7px;top:587px;width:338px;height:50px;box-shadow:inset 1px 1px 0 #a8a8a8,inset -1px -1px 0 #fff"></div>
  <div style="left:345px;top:587px;width:50px;height:50px;box-shadow:inset 1px 1px 0 #a8a8a8,inset -1px -1px 0 #fff"></div>
  <div style="left:395px;top:587px;width:508px;height:50px;box-shadow:inset 1px 1px 0 #a8a8a8,inset -1px -1px 0 #fff"></div>
  <div class="bb ba" style="left:13px;top:592px;width:32px;height:17px">Main</div>
  <div class="bb ba" style="left:56px;top:592px;width:32px;height:17px">Peak</div>
  <span style="left:96px;top:592px;font-size:12px;line-height:15px">-</span>
  <div class="bb ba" style="left:107px;top:592px;width:34px;height:17px;color:#e01818">OVL1</div>
  <div class="bb" style="left:146px;top:592px;width:18px;height:17px"></div>
  <div style="left:168px;top:590px;width:120px;height:20px;background:#fff;border:1px solid #ababab"></div>
  <div class="bb" style="left:296px;top:592px;width:17px;height:17px">L</div>
  <div class="bb" style="left:320px;top:592px;width:17px;height:17px;color:#a0a0a0;border-color:#d8d8d8;background:#efefef">S</div>
  <div class="bb ba" style="left:354px;top:592px;width:31px;height:17px">THD</div>
  <span style="left:14px;top:617px;font-size:11px;line-height:15px;font-weight:bold">Avg:</span>
  <div style="left:41px;top:613px;width:49px;height:20px;background:#fff;border:1px solid #ababab"></div>
  <span style="left:45px;top:614px;font-size:13px;line-height:15px;transform:scaleX(.8);transform-origin:0 0">1</span>
  <span style="left:96px;top:615px;font-size:12px;line-height:15px">-</span>
  <div class="bb" style="left:107px;top:615px;width:34px;height:17px;color:#7070f0">OVL2</div>
  <div class="bb" style="left:146px;top:615px;width:18px;height:17px"></div>
  <div style="left:168px;top:613px;width:120px;height:20px;background:#fff;border:1px solid #ababab"></div>
  <div class="bb" style="left:296px;top:615px;width:17px;height:17px">L</div>
  <div class="bb" style="left:320px;top:615px;width:17px;height:17px">S</div>
  <div class="bb ba" style="left:354px;top:615px;width:31px;height:17px">RMS</div>
  <svg width="400" height="642"><path id="oct" d="M153.200 595.700h3.400l2.400 2.400v3.400l-2.400 2.400h-3.400l-2.400-2.400v-3.400z" fill="#f00"/><path d="M153.200 618.700h3.400l2.400 2.400v3.400l-2.400 2.400h-3.400l-2.400-2.400v-3.400z" fill="#f00"/><path d="M78.500 621l3 3.500 3-3.500" stroke="#444" stroke-width="1.400" fill="none"/></svg>
</div>

<div id="wg" style="left:617px;top:133px;width:436px;height:509px;background:#ebebeb;box-shadow:inset 1px 1px 0 #f4f4f4,inset 0 -1px 0 #dedede">
<div style="left:8px;top:30px;width:424px;height:472px;background:#f0f0f0"></div>
</div>
<svg width="1053" height="642"><rect x="627" y="140" width="15" height="11" fill="#000"/><rect x="628" y="141" width="13" height="9" fill="#fff"/><path d="M628 141.500h13" stroke="#20e0f0" stroke-width="1" stroke-dasharray="1 1"/><path d="M628 143.500h13" stroke="#000" stroke-width="1" stroke-dasharray="3 1.500"/><path d="M628 145h13" stroke="#20e0f0" stroke-width="1.600" stroke-dasharray="2 1.500"/><rect x="629" y="146" width="14" height="10" fill="#000"/><rect x="630" y="147" width="12" height="8" fill="#fff"/><path d="M630 147.500h12M630 151.500h12M630 153.500h12" stroke="#20e0f0" stroke-width="1" stroke-dasharray="1 1"/><path d="M630.500 150l2.500-2.500 3.500 5.500 3.500-5.500 2 2.500" stroke="#000" stroke-width="1.100" fill="none"/></svg>
<span style="left:664.500px;top:140px;font-size:14.500px;line-height:18px;color:#1a1a1a;word-spacing:-0.800px" id="wgtitle">WaveGene  Ver. 1.40E  (C) 1999-2007 efu</span>
<div style="left:961px;top:146px;width:9px;height:2px;background:#000"></div>
<div style="left:987px;top:140px;width:10px;height:8px;border:1px solid #555;border-top-width:2px"></div>
<div style="left:1005px;top:134px;width:45px;height:20px;background:#bcbcbc"></div>
<svg width="1053" height="160"><path d="M1023.800 141l8.400 7.400M1032.200 141l-8.400 7.400" stroke="#fff" stroke-width="1.800" fill="none"/></svg>
<div style="left:625px;top:164px;width:424px;height:37px;background:#f0f0f0;box-shadow:inset 1px 1px 0 #a0a0a0,inset -1px -1px 0 #fff,inset 2px 2px 0 #fff,inset -2px -2px 0 #a0a0a0"></div>
<div class="raised" style="left:632px;top:170px;width:25px;height:25px"></div>
<div class="raised" style="left:656px;top:170px;width:25px;height:25px"></div>
<div class="raised" style="left:692px;top:170px;width:25px;height:25px"></div>
<div class="raised" style="left:716px;top:170px;width:25px;height:25px"></div>
<div class="raised" style="left:752px;top:170px;width:25px;height:25px"></div>
<div class="raised" style="left:1017px;top:170px;width:25px;height:25px"></div>
<svg width="1053" height="200" fill="none">
<g stroke="#a0a0a0" stroke-width="1.300">
<path d="M639 184.500v-4q0-3 3-3h1.500" stroke-width="2"/><path d="M643 174.300l3.200 3.200-3.200 3.200z" fill="#a0a0a0" stroke="none"/>
<path d="M646.700 174.500h5l2 2v6h-7z" fill="#f0f0f0"/><rect x="636.700" y="186.700" width="10" height="4.800" fill="#f0f0f0"/>
<path d="M660.700 174.500h5l2 2v6h-7z" fill="#f0f0f0"/><path d="M669.500 177.500h2.500q3 0 3 3v2.500" stroke-width="2"/><path d="M671.800 182.500l3.200 3.200 3.200-3.200z" fill="#a0a0a0" stroke="none"/><rect x="667.700" y="186.700" width="10" height="4.800" fill="#f0f0f0"/>
<path d="M698.500 175.800v12.400l11-6.200z" stroke-width="1"/>
<path d="M755.700 173.700h5.500l2.300 2.300v8h-7.800z" fill="#f0f0f0"/><path d="M759.500 177.500v4.500M758.500 177.500h1M759.500 175.300v1" stroke-width="1"/><path d="M765.500 178h2.500q3 0 3 3v2" stroke-width="2"/><path d="M767.800 182.500l3.200 3.200 3.200-3.200z" fill="#a0a0a0" stroke="none"/><rect x="763.700" y="186.700" width="10" height="4.800" fill="#f0f0f0"/>
<path d="M1022.500 177.500h8M1022.500 177.500v3.500M1022.500 186.500h10M1023.500 181.500l3 3.500 2.500-3 3.500 5" stroke-width="1.200"/><path d="M1033.500 174.500v13.500M1033.500 174.500l4 2.500v9l-4 2.500M1036 178.500v1.500M1036 182v1.500M1039 180v4" stroke-width="1" stroke-dasharray="2.500 1"/>
</g>
<path d="M699.500 189l10.600-5.800" stroke="#fff" stroke-width="1"/>
<rect x="722.600" y="177.300" width="10.500" height="10.500" fill="#000"/>
</svg>
<div class="sunk" style="left:778px;top:173px;width:45px;height:22px"><span class="t" style="left:3.5px;top:3px;color:#000;letter-spacing:-0.5px">20</span><div class="raised" style="left:25px;top:2px;width:18px;height:18px"><svg width="18" height="18"><path d="M6.5 8.0h7l-3.500 4z" fill="#000"/></svg></div></div>
<span class="t " style="left:827px;top:176px">sec</span>
<div class="sunk" style="left:853px;top:173px;width:57px;height:22px"><span class="t" style="left:3.5px;top:3px;color:#8e8e8e;letter-spacing:-0.5px">44100</span><div class="raised" style="left:37px;top:2px;width:18px;height:18px"><svg width="18" height="18"><path d="M6.5 8.0h7l-3.500 4z" fill="#a0a0a0"/></svg></div></div>
<div class="sunk" style="left:912px;top:173px;width:40px;height:22px"><span class="t" style="left:3.5px;top:3px;color:#8e8e8e;letter-spacing:-0.5px">24</span><div class="raised" style="left:20px;top:2px;width:18px;height:18px"><svg width="18" height="18"><path d="M6.5 8.0h7l-3.500 4z" fill="#a0a0a0"/></svg></div></div>
<div class="sunk" style="left:954px;top:173px;width:58px;height:22px"><span class="t" style="left:3.5px;top:3px;color:#8e8e8e;letter-spacing:-0.5px">Mono</span><div class="raised" style="left:38px;top:2px;width:18px;height:18px"><svg width="18" height="18"><path d="M6.5 8.0h7l-3.500 4z" fill="#a0a0a0"/></svg></div></div>
<div class="sunk" style="left:626px;top:204px;width:195px;height:23px"></div>
<span class="t " style="left:870px;top:207px;width:18px;overflow:hidden">Lch</span>
<div class="sunk1" style="left:891px;top:206px;width:35px;height:16px;box-shadow:inset 1px 1px 0 #a0a0a0,inset -1px -1px 0 #fff"></div>
<span class="t " style="left:896px;top:207px">-10.0</span>
<span class="t " style="left:930px;top:207px;width:13px;overflow:hidden">dB</span>
<span class="t g" style="left:956px;top:207px;width:18px;overflow:hidden">Rch</span>
<div class="sunk1" style="left:977px;top:206px;width:35px;height:16px"></div>
<span class="t g" style="left:1016px;top:207px;width:13px;overflow:hidden">dB</span>
<div class="grp" style="left:626px;top:234px;width:195px;height:130px"></div>
<span class="t" style="left:632px;top:227px;background:#f0f0f0;padding:0 0 0 2px">Wave1</span>
<div class="grp" style="left:826px;top:234px;width:108px;height:130px"></div>
<span class="t" style="left:832px;top:227px;background:#f0f0f0;padding:0 0 0 2px">Wave2</span>
<div class="grp" style="left:939px;top:234px;width:108px;height:130px"></div>
<span class="t" style="left:945px;top:227px;background:#f0f0f0;padding:0 0 0 2px">Wave3</span>
<div class="sunk" style="left:634px;top:244px;width:89px;height:22px"><span class="t" style="left:3.5px;top:3px;color:#000;letter-spacing:-0.5px">sine</span><div class="raised" style="left:69px;top:2px;width:18px;height:18px"><svg width="18" height="18"><path d="M6.5 8.0h7l-3.500 4z" fill="#000"/></svg></div></div>
<div class="sunk" style="left:634px;top:268px;width:70px;height:22px"><span class="t" style="left:3.5px;top:3px;color:#000;letter-spacing:-0.5px">400</span><div class="raised" style="left:50px;top:2px;width:18px;height:18px"><svg width="18" height="18"><path d="M6.5 8.0h7l-3.500 4z" fill="#000"/></svg></div></div>
<div class="sunk" style="left:634px;top:292px;width:70px;height:22px"><span class="t" style="left:3.5px;top:3px;color:#000;letter-spacing:-0.5px">-10</span><div class="raised" style="left:50px;top:2px;width:18px;height:18px"><svg width="18" height="18"><path d="M6.5 8.0h7l-3.500 4z" fill="#000"/></svg></div></div>
<div class="sunk" style="left:634px;top:316px;width:70px;height:22px"><span class="t" style="left:3.5px;top:3px;color:#000;letter-spacing:-0.5px">0</span><div class="raised" style="left:50px;top:2px;width:18px;height:18px"><svg width="18" height="18"><path d="M6.5 8.0h7l-3.500 4z" fill="#000"/></svg></div></div>
<div class="sunk" style="left:634px;top:340px;width:43px;height:21px"><span class="t" style="left:3.5px;top:3px;color:#000;letter-spacing:-0.5px">L+R</span><div class="raised" style="left:23px;top:2px;width:18px;height:17px"><svg width="18" height="17"><path d="M6.5 7.5h7l-3.500 4z" fill="#000"/></svg></div></div>
<div class="raised" style="left:703px;top:268px;width:13px;height:11px"><svg width="13" height="11"><path d="M4.500 6.500h4l-2-2.500z" fill="#000"/></svg></div><div class="raised" style="left:703px;top:279px;width:13px;height:11px"><svg width="13" height="11"><path d="M4.500 4h4l-2 2.500z" fill="#000"/></svg></div>
<div class="raised" style="left:703px;top:292px;width:13px;height:11px"><svg width="13" height="11"><path d="M4.500 6.500h4l-2-2.500z" fill="#000"/></svg></div><div class="raised" style="left:703px;top:303px;width:13px;height:11px"><svg width="13" height="11"><path d="M4.500 4h4l-2 2.500z" fill="#000"/></svg></div>
<span class="t " style="left:720px;top:272px">Hz</span>
<span class="t " style="left:720px;top:296px">dB</span>
<span class="t " style="left:708px;top:320px">%</span>
<div class="sunk" style="left:740px;top:243px;width:41px;height:22px"><span class="t" style="left:3.5px;top:3px;color:#8e8e8e;letter-spacing:-0.5px">0</span><div class="raised" style="left:21px;top:2px;width:18px;height:18px"><svg width="18" height="18"><path d="M6.5 8.0h7l-3.500 4z" fill="#a0a0a0"/></svg></div></div>
<span class="t " style="left:784px;top:249px;width:12px;overflow:hidden">Sa</span>
<div class="sunk" style="left:740px;top:267px;width:41px;height:22px"><span class="t" style="left:3.5px;top:3px;color:#000;letter-spacing:-0.5px">0</span><div class="raised" style="left:21px;top:2px;width:18px;height:18px"><svg width="18" height="18"><path d="M6.5 8.0h7l-3.500 4z" fill="#000"/></svg></div></div>
<span class="t" style="left:784px;top:271px;width:20px;height:13px;overflow:hidden">deg</span>
<div class="sunk" style="left:740px;top:296px;width:13px;height:13px;background:#f0f0f0"></div>
<span class="t g" style="left:759px;top:294px;width:30px;overflow:hidden">Swee</span>
<div class="sunk" style="left:740px;top:319px;width:13px;height:13px;background:#fff"><svg width="13" height="13"><path d="M3.200 6l2.200 2.400 4.400-4.800" stroke="#000" stroke-width="1.900" fill="none"/></svg></div>
<span class="t " style="left:758px;top:317px">Modulation</span>
<span class="t " style="left:690px;top:342px">Gate:</span>
<div class="sunk" style="left:719px;top:340px;width:46px;height:21px"><span class="t" style="left:3.5px;top:3px;color:#8e8e8e;letter-spacing:-0.5px">0</span><div class="raised" style="left:26px;top:2px;width:18px;height:17px"><svg width="18" height="17"><path d="M6.5 7.5h7l-3.500 4z" fill="#a0a0a0"/></svg></div></div>
<div class="sunk" style="left:767px;top:340px;width:46px;height:21px"><span class="t" style="left:3.5px;top:3px;color:#8e8e8e;letter-spacing:-0.5px">0</span><div class="raised" style="left:26px;top:2px;width:18px;height:17px"><svg width="18" height="17"><path d="M6.5 7.5h7l-3.500 4z" fill="#a0a0a0"/></svg></div></div>
<div class="sunk" style="left:834px;top:244px;width:87.5px;height:22px"><span class="t" style="left:3.5px;top:3px;color:#000;letter-spacing:-0.5px">sine</span><div class="raised" style="left:67.5px;top:2px;width:18px;height:18px"><svg width="18" height="18"><path d="M6.5 8.0h7l-3.500 4z" fill="#000"/></svg></div></div>
<div class="sunk" style="left:834px;top:268px;width:70px;height:22px"><span class="t" style="left:3.5px;top:3px;color:#000;letter-spacing:-0.5px">10000</span><div class="raised" style="left:50px;top:2px;width:18px;height:18px"><svg width="18" height="18"><path d="M6.5 8.0h7l-3.500 4z" fill="#000"/></svg></div></div>
<div class="sunk" style="left:834px;top:292px;width:70px;height:22px"><span class="t" style="left:3.5px;top:3px;color:#000;letter-spacing:-0.5px">-10</span><div class="raised" style="left:50px;top:2px;width:18px;height:18px"><svg width="18" height="18"><path d="M6.5 8.0h7l-3.500 4z" fill="#000"/></svg></div></div>
<div class="sunk" style="left:834px;top:316px;width:70px;height:22px"><span class="t" style="left:3.5px;top:3px;color:#000;letter-spacing:-0.5px">0</span><div class="raised" style="left:50px;top:2px;width:18px;height:18px"><svg width="18" height="18"><path d="M6.5 8.0h7l-3.500 4z" fill="#000"/></svg></div></div>
<div class="sunk" style="left:834px;top:340px;width:42px;height:21px"><span class="t" style="left:3.5px;top:3px;color:#000;letter-spacing:-0.5px">OFF</span><div class="raised" style="left:22px;top:2px;width:18px;height:17px"><svg width="18" height="17"><path d="M6.5 7.5h7l-3.500 4z" fill="#000"/></svg></div></div>
<span class="t " style="left:908px;top:272px">Hz</span>
<span class="t " style="left:908px;top:296px">dB</span>
<span class="t " style="left:908px;top:320px">%</span>
<div class="sunk" style="left:885px;top:343px;width:13px;height:13px;background:#f0f0f0"></div>
<span class="t g" style="left:904px;top:341px;width:23px;overflow:hidden">Gate</span>
<div class="sunk" style="left:947px;top:244px;width:87.5px;height:22px"><span class="t" style="left:3.5px;top:3px;color:#000;letter-spacing:-0.5px">sine</span><div class="raised" style="left:67.5px;top:2px;width:18px;height:18px"><svg width="18" height="18"><path d="M6.5 8.0h7l-3.500 4z" fill="#000"/></svg></div></div>
<div class="sunk" style="left:947px;top:268px;width:70px;height:22px"><span class="t" style="left:3.5px;top:3px;color:#000;letter-spacing:-0.5px">1000</span><div class="raised" style="left:50px;top:2px;width:18px;height:18px"><svg width="18" height="18"><path d="M6.5 8.0h7l-3.500 4z" fill="#000"/></svg></div></div>
<div class="sunk" style="left:947px;top:292px;width:70px;height:22px"><span class="t" style="left:3.5px;top:3px;color:#000;letter-spacing:-0.5px">-10</span><div class="raised" style="left:50px;top:2px;width:18px;height:18px"><svg width="18" height="18"><path d="M6.5 8.0h7l-3.500 4z" fill="#000"/></svg></div></div>
<div class="sunk" style="left:947px;top:316px;width:70px;height:22px"><span class="t" style="left:3.5px;top:3px;color:#000;letter-spacing:-0.5px">0</span><div class="raised" style="left:50px;top:2px;width:18px;height:18px"><svg width="18" height="18"><path d="M6.5 8.0h7l-3.500 4z" fill="#000"/></svg></div></div>
<div class="sunk" style="left:947px;top:340px;width:42px;height:21px"><span class="t" style="left:3.5px;top:3px;color:#000;letter-spacing:-0.5px">OFF</span><div class="raised" style="left:22px;top:2px;width:18px;height:17px"><svg width="18" height="17"><path d="M6.5 7.5h7l-3.500 4z" fill="#000"/></svg></div></div>
<span class="t " style="left:1021px;top:272px">Hz</span>
<span class="t " style="left:1021px;top:296px">dB</span>
<span class="t " style="left:1021px;top:320px">%</span>
<div class="sunk" style="left:998px;top:343px;width:13px;height:13px;background:#f0f0f0"></div>
<span class="t g" style="left:1017px;top:341px;width:23px;overflow:hidden">Gate</span>
<div style="left:625px;top:365px;width:424px;height:269px;background:#fff"></div>
<div style="left:625px;top:367px;width:422px;height:265px;background:#909090"></div>
<div style="left:627px;top:369px;width:420px;height:263px;background:#000"></div>
<svg width="1053" height="642">
<path d="M667 385.5H1041" class="gd"/>
<path d="M667 495.5H1041" class="gd"/>
<path d="M667 605.5H1041" class="gd"/>
<path d="M733.5 374V617" class="gd"/>
<path d="M799.5 374V617" class="gd"/>
<path d="M865.5 374V617" class="gd"/>
<path d="M931.5 374V617" class="gd"/>
<path d="M997.5 374V617" class="gd"/>
<polyline points="667.0,461.9 668.5,460.0 670.0,458.6 671.5,457.7 673.0,457.3 674.5,457.4 676.0,458.0 677.5,459.0 679.0,460.6 680.5,462.6 682.0,465.0 683.5,467.8 685.0,471.0 686.5,474.5 688.0,478.2 689.5,482.2 691.0,486.3 692.5,490.6 694.0,494.9 695.5,499.3 697.0,503.6 698.5,507.7 700.0,511.7 701.5,515.5 703.0,519.1 704.5,522.3 706.0,525.2 707.5,527.7 709.0,529.7 710.5,531.3 712.0,532.5 713.5,533.1 715.0,533.3 716.5,533.0 718.0,532.1 719.5,530.8 721.0,529.1 722.5,526.9 724.0,524.3 725.5,521.3 727.0,517.9 728.5,514.3 730.0,510.4 731.5,506.4 733.0,502.1 734.5,497.8 736.0,493.5 737.5,489.2 739.0,484.9 740.5,480.8 742.0,476.9 743.5,473.3 745.0,469.9 746.5,466.8 748.0,464.1 749.5,461.9 751.0,460.0 752.5,458.6 754.0,457.7 755.5,457.3 757.0,457.4 758.5,458.0 760.0,459.0 761.5,460.6 763.0,462.6 764.5,465.0 766.0,467.8 767.5,471.0 769.0,474.5 770.5,478.2 772.0,482.2 773.5,486.3 775.0,490.6 776.5,494.9 778.0,499.3 779.5,503.6 781.0,507.7 782.5,511.7 784.0,515.5 785.5,519.1 787.0,522.3 788.5,525.2 790.0,527.7 791.5,529.7 793.0,531.3 794.5,532.5 796.0,533.1 797.5,533.3 799.0,533.0 800.5,532.1 802.0,530.8 803.5,529.1 805.0,526.9 806.5,524.3 808.0,521.3 809.5,517.9 811.0,514.3 812.5,510.4 814.0,506.4 815.5,502.1 817.0,497.8 818.5,493.5 820.0,489.2 821.5,484.9 823.0,480.8 824.5,476.9 826.0,473.3 827.5,469.9 829.0,466.8 830.5,464.1 832.0,461.9 833.5,460.0 835.0,458.6 836.5,457.7 838.0,457.3 839.5,457.4 841.0,458.0 842.5,459.0 844.0,460.6 845.5,462.6 847.0,465.0 848.5,467.8 850.0,471.0 851.5,474.5 853.0,478.2 854.5,482.2 856.0,486.3 857.5,490.6 859.0,494.9 860.5,499.3 862.0,503.6 863.5,507.7 865.0,511.7 866.5,515.5 868.0,519.1 869.5,522.3 871.0,525.2 872.5,527.7 874.0,529.7 875.5,531.3 877.0,532.5 878.5,533.1 880.0,533.3 881.5,533.0 883.0,532.1 884.5,530.8 886.0,529.1 887.5,526.9 889.0,524.3 890.5,521.3 892.0,517.9 893.5,514.3 895.0,510.4 896.5,506.4 898.0,502.1 899.5,497.8 901.0,493.5 902.5,489.2 904.0,484.9 905.5,480.8 907.0,476.9 908.5,473.3 910.0,469.9 911.5,466.8 913.0,464.1 914.5,461.9 916.0,460.0 917.5,458.6 919.0,457.7 920.5,457.3 922.0,457.4 923.5,458.0 925.0,459.0 926.5,460.6 928.0,462.6 929.5,465.0 931.0,467.8 932.5,471.0 934.0,474.5 935.5,478.2 937.0,482.2 938.5,486.3 940.0,490.6 941.5,494.9 943.0,499.3 944.5,503.6 946.0,507.7 947.5,511.7 949.0,515.5 950.5,519.1 952.0,522.3 953.5,525.2 955.0,527.7 956.5,529.7 958.0,531.3 959.5,532.5 961.0,533.1 962.5,533.3 964.0,533.0 965.5,532.1 967.0,530.8 968.5,529.1 970.0,526.9 971.5,524.3 973.0,521.3 974.5,517.9 976.0,514.3 977.5,510.4 979.0,506.4 980.5,502.1 982.0,497.8 983.5,493.5 985.0,489.2 986.5,484.9 988.0,480.8 989.5,476.9 991.0,473.3 992.5,469.9 994.0,466.8 995.5,464.1 997.0,461.9 998.5,460.0 1000.0,458.6 1001.5,457.7 1003.0,457.3 1004.5,457.4 1006.0,458.0 1007.5,459.0 1009.0,460.6 1010.5,462.6 1012.0,465.0 1013.5,467.8 1015.0,471.0 1016.5,474.5 1018.0,478.2 1019.5,482.2 1021.0,486.3 1022.5,490.6 1024.0,494.9 1025.5,499.3 1027.0,503.6 1028.5,507.7 1030.0,511.7 1031.5,515.5 1033.0,519.1 1034.5,522.3 1036.0,525.2 1037.5,527.7 1039.0,529.7" stroke="#00ff00" stroke-width="1" fill="none"/>
<path d="M666.500 373.500H1041.500V617.500H666.500z" class="fr"/>
<g class="lab" text-anchor="end"><text x="665" y="390">30000</text><text x="665" y="500">0</text><text x="665" y="610">-30000</text></g>
<g class="lab" text-anchor="middle"><text x="733.500" y="631">2</text><text x="799.500" y="631">4</text><text x="865.500" y="631">6</text><text x="931.500" y="631">8</text><text x="964" y="632">ms</text><text x="997.500" y="631">10</text></g>
</svg>
</body></html>
